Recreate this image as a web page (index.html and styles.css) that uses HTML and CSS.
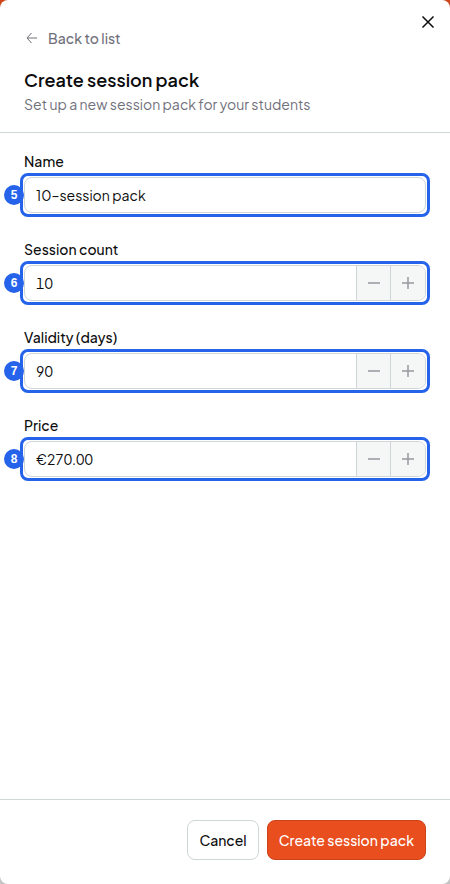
FILE: index.html
```html
<!DOCTYPE html>
<html lang="en">
<head>
<meta charset="utf-8">
<meta name="viewport" content="width=device-width, initial-scale=1">
<title>Create session pack</title>
<link rel="stylesheet" href="styles.css">
</head>
<body>
<form class="panel">
  <header class="header">
    <button class="close" type="button" aria-label="Close">
      <svg width="14" height="14" viewBox="0 0 14 14"><path d="M1.5 1.5 12.5 12.5M12.5 1.5 1.5 12.5"/></svg>
    </button>
    <a class="back" href="#">
      <svg width="16" height="16" viewBox="0 0 16 16"><path d="M13 8H3M7.5 3 3 8l4.5 5"/></svg>
      Back to list
    </a>
    <h1 class="title">Create session pack</h1>
    <p class="subtitle">Set up a new session pack for your students</p>
  </header>

  <main class="fields">
    <div class="field">
      <label class="label" for="name">Name</label>
      <div class="control">
        <span class="badge">5</span>
        <input class="input" id="name" type="text" value="10–session pack">
      </div>
    </div>
    <div class="field">
      <label class="label" for="count">Session count</label>
      <div class="control">
        <span class="badge">6</span>
        <input class="input number" id="count" type="text" inputmode="numeric" value="10">
        <button class="step" type="button" aria-label="Decrease session count"><svg width="12" height="12" viewBox="0 0 12 12"><path d="M0 6h12"/></svg></button>
        <button class="step" type="button" aria-label="Increase session count"><svg width="12" height="12" viewBox="0 0 12 12"><path d="M0 6h12M6 0v12"/></svg></button>
      </div>
    </div>
    <div class="field">
      <label class="label" for="validity">Validity (days)</label>
      <div class="control">
        <span class="badge">7</span>
        <input class="input number" id="validity" type="text" inputmode="numeric" value="90">
        <button class="step" type="button" aria-label="Decrease validity"><svg width="12" height="12" viewBox="0 0 12 12"><path d="M0 6h12"/></svg></button>
        <button class="step" type="button" aria-label="Increase validity"><svg width="12" height="12" viewBox="0 0 12 12"><path d="M0 6h12M6 0v12"/></svg></button>
      </div>
    </div>
    <div class="field">
      <label class="label" for="price">Price</label>
      <div class="control">
        <span class="badge">8</span>
        <input class="input number" id="price" type="text" inputmode="decimal" value="€270.00">
        <button class="step" type="button" aria-label="Decrease price"><svg width="12" height="12" viewBox="0 0 12 12"><path d="M0 6h12"/></svg></button>
        <button class="step" type="button" aria-label="Increase price"><svg width="12" height="12" viewBox="0 0 12 12"><path d="M0 6h12M6 0v12"/></svg></button>
      </div>
    </div>
  </main>

  <footer class="footer">
    <button class="button" type="button">Cancel</button>
    <button class="button primary" type="submit">Create session pack</button>
  </footer>
</form>
</body>
</html>
```
FILE: styles.css
```css
* {
  box-sizing: border-box;
}

body {
  margin: 0;
  background: linear-gradient(#cf431b 50%, #c4c4c4 50%);
  color: #0c0c0d;
  font-family: "Plus Jakarta Sans", Inter, sans-serif;
  font-size: 14px;
  line-height: 20px;
}

button,
input {
  font: inherit;
  color: inherit;
}

svg {
  display: block;
  fill: none;
  stroke: currentColor;
}

.panel {
  display: flex;
  flex-direction: column;
  min-height: 100vh;
  border-radius: 8px;
  background: #fff;
}

.header {
  position: relative;
  padding: 28px 24px 18px;
  border-bottom: 1px solid #cfd6d8;
}

.close {
  position: absolute;
  top: 11px;
  right: 11px;
  padding: 4px;
  border: 0;
  background: none;
}

.close svg {
  stroke-width: 1.5;
}

.back {
  display: inline-flex;
  align-items: center;
  gap: 8px;
  color: #70707b;
  font-weight: 500;
  text-decoration: none;
}

.title {
  margin: 18px 0 0;
  font-size: 18px;
  font-weight: 600;
  line-height: 24px;
}

.subtitle {
  margin: 2px 0 0;
  color: #70707b;
}

.fields {
  display: flex;
  flex: 1;
  flex-direction: column;
  gap: 26px;
  padding: 18px 24px;
}

.field {
  display: flex;
  flex-direction: column;
  gap: 6px;
}

.label {
  font-weight: 500;
}

.control {
  position: relative;
  display: flex;
  height: 36px;
  border: 1px solid #cfd6d8;
  border-radius: 8px;
}

.control::before {
  position: absolute;
  inset: -5px;
  border: 3px solid #2563eb;
  border-radius: 8px;
  content: "";
  pointer-events: none;
}

.badge {
  position: absolute;
  top: 7px;
  left: -21px;
  width: 20px;
  height: 20px;
  border-radius: 50%;
  background: #2563eb;
  color: #fff;
  font-family: "Liberation Sans", sans-serif;
  font-size: 12px;
  font-weight: 700;
  text-align: center;
}

.input {
  flex: 1;
  min-width: 0;
  padding: 0 11px;
  border: 0;
  border-radius: 7px;
  outline: 0;
  background: none;
}

.number {
  font-variant-numeric: tabular-nums;
}

.step {
  display: flex;
  align-items: center;
  justify-content: center;
  width: 34px;
  padding: 0;
  border: 0;
  border-left: 1px solid #cfd6d8;
  background: #f5f7f7;
  color: #96969e;
}

.step svg {
  stroke-width: 1.5;
}

.step:last-child {
  width: 35px;
  border-radius: 0 7px 7px 0;
}

.footer {
  display: flex;
  justify-content: flex-end;
  gap: 8px;
  padding: 20px 24px 24px;
  border-top: 1px solid #cfd6d8;
}

.button {
  height: 40px;
  padding: 0 11px;
  border: 1px solid #cfd6d8;
  border-radius: 8px;
  background: #fff;
  font-weight: 500;
}

.primary {
  border-color: #cb441c;
  background: #e94e1f;
  color: #fff;
}
```
